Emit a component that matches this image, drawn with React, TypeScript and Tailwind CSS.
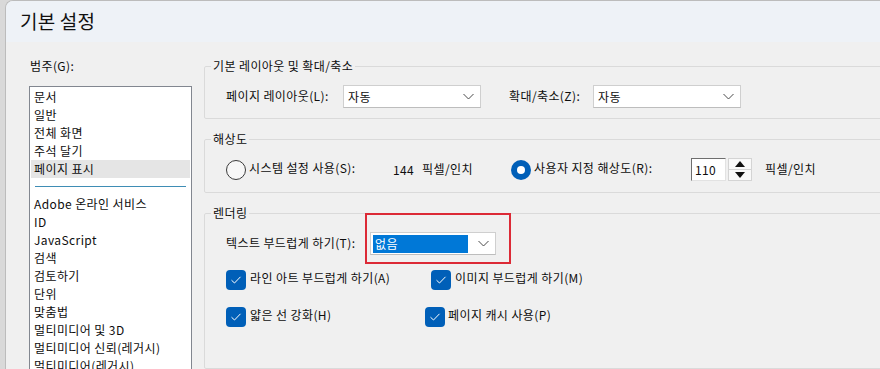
import React from 'react'

const Chevron = () => (
  <svg width="11" height="7" viewBox="0 0 11 7" fill="none">
    <path d="M0.5 1 L5.5 6 L10.5 1" stroke="#4a4a4a" strokeWidth="1" />
  </svg>
)

const Select = ({ value, width, highlighted }: { value: string; width: string; highlighted?: boolean }) => (
  <div className={`${width} h-[23px] bg-white border border-[#cfcfcf] border-b-[#bdbdbd] flex items-center pr-[6px]`}>
    {highlighted ? (
      <div className="ml-[2px] w-[95px] h-[18px] bg-[#0078d7] text-white flex items-center pl-[2px]">{value}</div>
    ) : (
      <span className="pl-[4px]">{value}</span>
    )}
    <div className="ml-auto flex items-center">
      <Chevron />
    </div>
  </div>
)

const Checkbox = () => (
  <div className="w-[20px] h-[20px] rounded-[4px] bg-[#005fb8] flex items-center justify-center shrink-0">
    <svg width="12" height="10" viewBox="0 0 12 10" fill="none">
      <path d="M1.5 5.2 L4.5 8 L10.5 1.8" stroke="white" strokeWidth="1" />
    </svg>
  </div>
)

const Group = ({ title, children, className }: { title: string; children: React.ReactNode; className?: string }) => (
  <fieldset className={`border border-[#dadada] rounded-[2px] ${className ?? ''}`}>
    <legend className="ml-[6px] px-[2px] leading-[16px]">{title}</legend>
    {children}
  </fieldset>
)

const categories = ['문서', '일반', '전체 화면', '주석 달기', '페이지 표시']
const moreCategories = [
  'Adobe 온라인 서비스',
  'ID',
  'JavaScript',
  '검색',
  '검토하기',
  '단위',
  '맞춤법',
  '멀티미디어 및 3D',
  '멀티미디어 신뢰(레거시)',
  '멀티미디어(레거시)',
]

export default function App() {
  return (
    <div className="w-[880px] h-[369px] overflow-hidden bg-[#d9d9d9] pl-[5px] font-['Noto_Sans_CJK_KR',sans-serif] text-[12px] leading-[16px] tracking-[0.4px] text-[#0d0d0d]">
      <div className="w-[910px] h-[380px] rounded-tl-[8px] border-l border-t border-[#bcbcbc] bg-[#f0f0f0] overflow-hidden">
        {/* title bar */}
        <div className="h-[41px] bg-[#eef2f7] flex items-center pl-[14px] pb-[1px]">
          <span className="text-[19px] leading-[24px] tracking-[0.2px] text-[#111]">기본 설정</span>
        </div>

        <div className="flex">
          {/* category list */}
          <div className="pl-[23px] pt-[16px] w-[186px] shrink-0">
            <div className="pl-[1px]">범주(G):</div>
            <div className="mt-[12px] h-[300px] w-[163px] bg-white border border-[#828790] p-[1px]">
              {categories.map((c) => (
                <div
                  key={c}
                  className={`h-[18px] leading-[18px] pl-[3px] ${c === '페이지 표시' ? 'bg-[#e5e5e5]' : ''}`}
                >
                  {c}
                </div>
              ))}
              <div className="h-[17px] flex items-center px-[4px] pb-[1px]">
                <div className="h-px w-full bg-[#3f8db5]" />
              </div>
              {moreCategories.map((c) => (
                <div key={c} className="h-[18px] leading-[18px] pl-[3px] whitespace-nowrap">
                  {c}
                </div>
              ))}
            </div>
          </div>

          {/* settings */}
          <div className="ml-[12px] pt-[16px] flex-1 flex flex-col">
            <Group title="기본 레이아웃 및 확대/축소">
              <div className="flex items-center h-[23px] mt-[11px] mb-[10px] pl-[21px]">
                <span className="w-[117px] mb-[2px]">페이지 레이아웃(L):</span>
                <Select value="자동" width="w-[138px]" />
                <span className="ml-[28px] w-[84px] mb-[2px]">확대/축소(Z):</span>
                <Select value="자동" width="w-[148px]" />
              </div>
            </Group>

            <Group title="해상도" className="mt-[12px]">
              <div className="flex items-center h-[23px] mt-[11px] mb-[11px] pl-[21px]">
                <div className="w-[20px] h-[20px] rounded-full border border-[#3a3a3a] bg-[#f7f7f7] shrink-0" />
                <span className="ml-[3px] w-[144px] mb-[4px]">시스템 설정 사용(S):</span>
                <span className="w-[29px]">144</span>
                <span className="w-[89px] mb-[2px]">픽셀/인치</span>
                <div className="w-[20px] h-[20px] rounded-full bg-[#005fb8] flex items-center justify-center shrink-0">
                  <div className="w-[8px] h-[8px] rounded-full bg-white" />
                </div>
                <span className="ml-[3px] w-[157px] mb-[4px]">사용자 지정 해상도(R):</span>
                <div className="w-[35px] h-[23px] bg-white border-t border-l border-[#6e6e6e] border-r border-b border-r-[#e2e2e2] border-b-[#e2e2e2] pl-[3px] leading-[21px]">
                  110
                </div>
                <div className="ml-[2px] w-[24px] h-[23px] flex flex-col">
                  <div className="flex-1 bg-[#f9f9f9] border border-[#d4d4d4] flex items-center justify-center">
                    <svg width="10" height="6" viewBox="0 0 10 6">
                      <path d="M5 0 L10 6 L0 6 Z" fill="#111" />
                    </svg>
                  </div>
                  <div className="flex-1 bg-[#f9f9f9] border border-t-0 border-[#d4d4d4] flex items-center justify-center">
                    <svg width="10" height="6" viewBox="0 0 10 6">
                      <path d="M0 0 L10 0 L5 6 Z" fill="#111" />
                    </svg>
                  </div>
                </div>
                <span className="ml-[13px] mb-[2px]">픽셀/인치</span>
              </div>
            </Group>

            <Group title="렌더링" className="mt-[12px]">
              <div className="pl-[21px] pt-[11px] pb-[41px]">
                <div className="relative flex items-center h-[23px]">
                  <span className="w-[144px] mb-[2px]">텍스트 부드럽게 하기(T):</span>
                  <Select value="없음" width="w-[126px]" highlighted />
                  <div className="absolute left-[139px] top-[-19px] w-[146px] h-[51px] border-2 border-[#dc2a36] pointer-events-none" />
                </div>
                <div className="flex items-center h-[20px] mt-[15px]">
                  <Checkbox />
                  <span className="ml-[4px] w-[181px] mb-[4px]">라인 아트 부드럽게 하기(A)</span>
                  <Checkbox />
                  <span className="ml-[4px] mb-[4px]">이미지 부드럽게 하기(M)</span>
                </div>
                <div className="flex items-center h-[20px] mt-[17px]">
                  <Checkbox />
                  <span className="ml-[4px] w-[175px] mb-[4px]">얇은 선 강화(H)</span>
                  <Checkbox />
                  <span className="ml-[3px] mb-[4px]">페이지 캐시 사용(P)</span>
                </div>
              </div>
            </Group>
          </div>
        </div>
      </div>
    </div>
  )
}
